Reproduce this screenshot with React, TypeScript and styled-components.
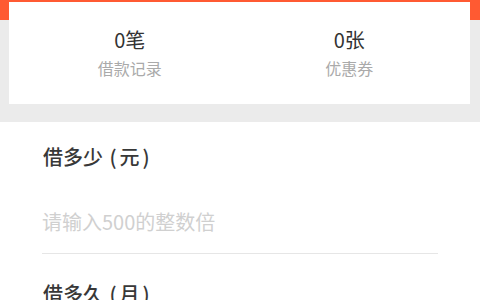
import React from "react";
import styled, { createGlobalStyle } from "styled-components";

const Global = createGlobalStyle`
  html, body { margin: 0; padding: 0; background: #ffffff; }
  body { font-family: "Noto Sans CJK SC", "Noto Sans", sans-serif; width: 480px; overflow: hidden; }
  * { box-sizing: border-box; }
`;

const Top = styled.div`
  background: linear-gradient(to bottom, #ff5a32 0, #ff5a32 20px, #ebebeb 20px, #ebebeb 100%);
  padding: 2px 10px 18px 9px;
`;

const Card = styled.div`
  background: #ffffff;
  display: flex;
  padding: 26px 11px 24px;
  height: 102px;
`;

const Stat = styled.div`
  flex: 1;
  display: flex;
  flex-direction: column;
  align-items: center;
`;

const StatValue = styled.div`
  font-size: 20px;
  line-height: 24px;
  font-weight: 400;
  color: #333333;
`;

const StatLabel = styled.div`
  margin-top: 5px;
  font-size: 16px;
  line-height: 22px;
  color: #aaaaaa;
`;

const Form = styled.div`
  background: #ffffff;
  padding: 21px 42px 0 42px;
`;

const Field = styled.div<{ $first?: boolean }>`
  margin-top: ${(p) => (p.$first ? 0 : 26)}px;
`;

const Label = styled.div`
  font-size: 20px;
  line-height: 28px;
  font-weight: 500;
  color: #383838;
  padding-left: 1px;
  word-spacing: 2px;
`;

const Unit = styled.span`
  letter-spacing: 3px;
`;

const Input = styled.input`
  display: block;
  width: 100%;
  height: 83px;
  padding: 18px 0 0 0;
  border: none;
  border-bottom: 1px solid #e6e6e6;
  outline: none;
  background: transparent;
  font-family: inherit;
  font-size: 20px;
  color: #333333;
  &::placeholder { color: #d0d0d0; }
`;

export default function App() {
  return (
    <>
      <Global />
      <Top>
        <Card>
          <Stat>
            <StatValue>0笔</StatValue>
            <StatLabel>借款记录</StatLabel>
          </Stat>
          <Stat>
            <StatValue>0张</StatValue>
            <StatLabel>优惠券</StatLabel>
          </Stat>
        </Card>
      </Top>
      <Form>
        <Field $first>
          <Label>
            借多少 <Unit>(元)</Unit>
          </Label>
          <Input placeholder="请输入500的整数倍" />
        </Field>
        <Field>
          <Label>
            借多久 <Unit>(月)</Unit>
          </Label>
        </Field>
      </Form>
    </>
  );
}
